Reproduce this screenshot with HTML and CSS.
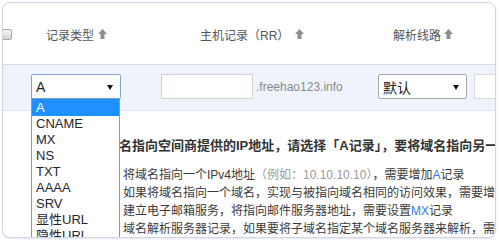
FILE: index.html
```html
<!DOCTYPE html>
<html lang="zh-CN">
<head>
<meta charset="utf-8">
<title>记录</title>
<link rel="stylesheet" href="styles.css">
</head>
<body>
<div class="panel">
  <div class="head">
    <div class="c0"><span class="chk"></span></div>
    <div class="c1 hc1"><span>记录类型</span><svg class="sort" viewBox="0 0 9 10"><polygon points="4.5,0 9,5 6.5,5 6.5,10 2.5,10 2.5,5 0,5"/></svg></div>
    <div class="c2 hc2"><span>主机记录（RR）</span><svg class="sort" viewBox="0 0 9 10"><polygon points="4.5,0 9,5 6.5,5 6.5,10 2.5,10 2.5,5 0,5"/></svg></div>
    <div class="c3 hc3"><span>解析线路</span><svg class="sort" viewBox="0 0 9 10"><polygon points="4.5,0 9,5 6.5,5 6.5,10 2.5,10 2.5,5 0,5"/></svg></div>
  </div>
  <div class="row">
    <div class="c0"></div>
    <div class="c1">
      <div class="sel sel-type focus">
        <span class="val">A</span><i class="caret"></i>
        <ul class="dropdown">
          <li class="on">A</li>
          <li>CNAME</li>
          <li>MX</li>
          <li>NS</li>
          <li>TXT</li>
          <li>AAAA</li>
          <li>SRV</li>
          <li>显性URL</li>
          <li>隐性URL</li>
        </ul>
      </div>
    </div>
    <div class="c2"><div class="inp inp-host"></div><span class="suffix">.freehao123.info</span></div>
    <div class="c3"><div class="sel sel-line"><span class="val">默认</span><i class="caret"></i></div></div>
    <div class="c4"><div class="inp inp-val"></div></div>
  </div>
  <div class="help">
    <p class="lead">如果要将域名指向空间商提供的IP地址，请选择「A记录」，要将域名指向另一个域名，请选择「CNAME记录」</p>
    <p class="line">将域名指向一个IPv4地址<span class="muted">（例如：10.10.10.10）</span>，需要增加<span class="hl">A</span>记录</p>
    <p class="line">如果将域名指向一个域名，实现与被指向域名相同的访问效果，需要增加<span class="hl">CNAME</span>记录</p>
    <p class="line">建立电子邮箱服务，将指向邮件服务器地址，需要设置<span class="hl">MX</span>记录</p>
    <p class="line">域名解析服务器记录，如果要将子域名指定某个域名服务器来解析，需要设置<span class="hl">NS</span>记录</p>
  </div>
</div>
</body>
</html>
```
FILE: styles.css
```css
* { box-sizing: border-box; }
html, body { margin: 0; padding: 0; background: #fff; }
body {
  font-family: "Liberation Sans", "Noto Sans CJK SC", sans-serif;
  font-size: 12px;
  color: #333;
}
.panel {
  margin: 2px;
  width: 494px;
  height: 236px;
  border: 1px solid #d3d3e3;
  border-radius: 8px;
  overflow: hidden;
  position: relative;
  background: #fff;
  box-shadow: 0 1px 2px rgba(170, 185, 220, 0.35);
}
.head, .row { display: flex; }
.c0 { width: 28px; flex: none; }
.c1 { width: 130px; flex: none; }
.c2 { width: 217px; flex: none; }
.c3 { width: 96px; flex: none; }
.c4 { flex: 1; }

.head {
  height: 62px;
  border-bottom: 1px solid #dadada;
  align-items: center;
  color: #555;
  padding-top: 1px;
}
.head > div { display: flex; align-items: center; }
.chk {
  display: block;
  width: 13px;
  height: 11px;
  margin-left: -4px;
  border: 1px solid #a6a6a6;
  border-radius: 2px;
  background: linear-gradient(#f6f6f6, #d6d6d6);
}
.hc1 { padding-left: 15px; }
.hc2 { padding-left: 39px; }
.hc3 { padding-left: 15px; }
.sort { width: 9px; height: 10px; margin-left: 4px; fill: #8e8e8e; flex: none; }
.hc2 .sort { margin-left: 6px; }
.hc3 .sort { margin-left: 3px; }

.row {
  height: 46px;
  background: #eef3fc;
  border-bottom: 1px solid #e1e6ee;
  padding-top: 9px;
  align-items: flex-start;
  position: relative;
  z-index: 2;
}
.sel {
  position: relative;
  height: 25px;
  background: #fff;
  border: 1px solid #a9a9a9;
  border-radius: 2px;
  display: flex;
  align-items: center;
  font-size: 14px;
  color: #222;
  padding-left: 4px;
}
.sel-type { width: 90px; }
.sel.focus { border-color: #83a6d6; }
.sel-line { width: 89px; }
.caret {
  position: absolute;
  right: 7px;
  top: 10px;
  width: 0;
  height: 0;
  border-left: 3.5px solid transparent;
  border-right: 3.5px solid transparent;
  border-top: 5px solid #111;
}
.inp {
  height: 25px;
  background: #fff;
  border: 1px solid #d2d2d2;
}
.inp-host { width: 92px; }
.inp-val { width: 40px; border-color: #dadada; }
.c2 { display: flex; align-items: center; }
.suffix { color: #8a8a8a; font-size: 12px; margin-left: 3px; }

.dropdown {
  position: absolute;
  left: -1px;
  top: 23px;
  width: 89px;
  margin: 0;
  padding: 0;
  list-style: none;
  background: #fff;
  border: 1px solid #7f9db9;
  font-size: 13px;
  color: #1f2430;
  z-index: 5;
}
.dropdown li {
  height: 16px;
  line-height: 16px;
  padding-left: 4px;
  white-space: nowrap;
}
.dropdown li.on {
  height: 17px;
  line-height: 17px;
  background: #1e90ff;
  color: #fff;
}

.help {
  padding-top: 26px;
  white-space: nowrap;
  position: relative;
  z-index: 1;
}
.help p { margin: 0; line-height: 18px; }
.lead {
  font-size: 13px;
  font-weight: bold;
  color: #333;
  padding-left: 51px;
  margin-bottom: 11px !important;
}
.line { padding-left: 120px; color: #3a3a3a; }
.muted { color: #999; }
.hl { color: #2d7be0; }
```
